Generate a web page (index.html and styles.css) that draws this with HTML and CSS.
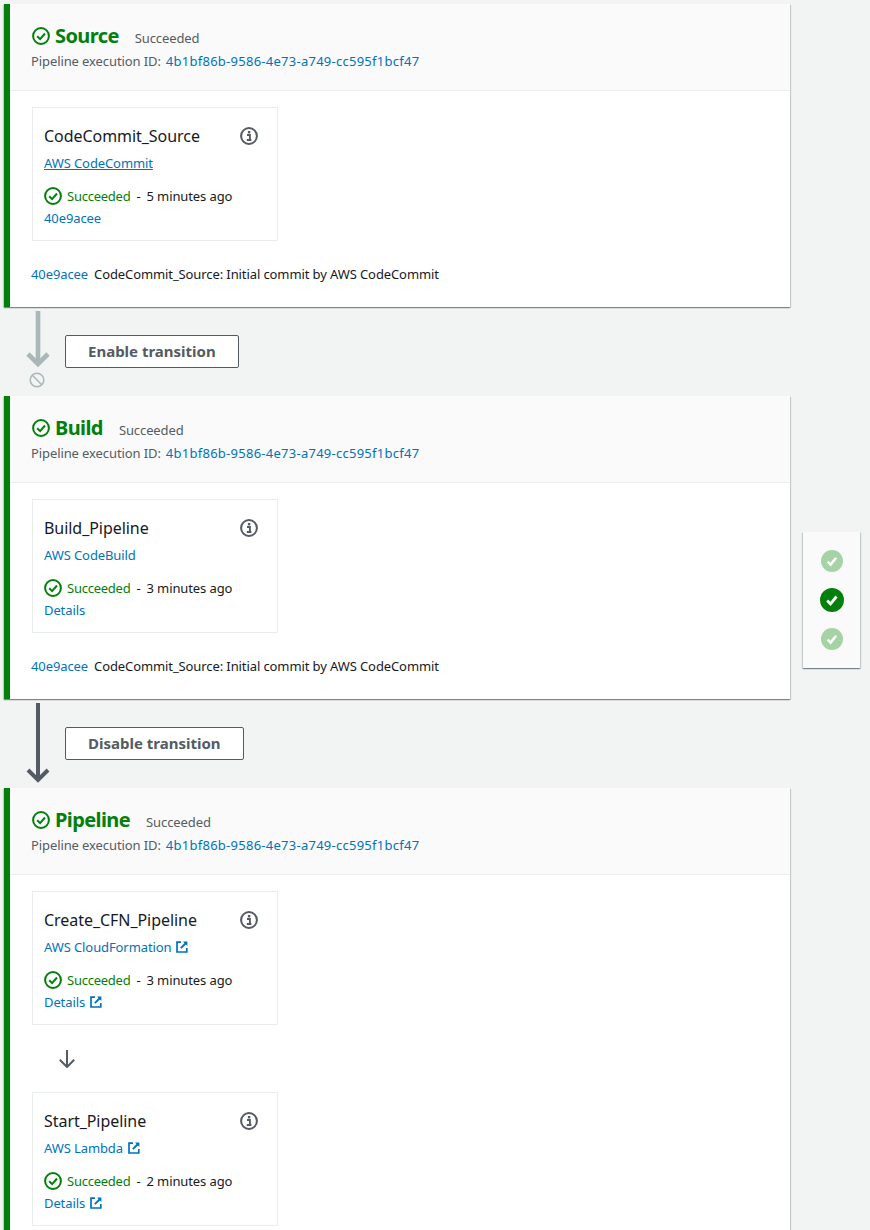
FILE: index.html
```html
<!DOCTYPE html>
<html lang="en">
<head>
<meta charset="utf-8">
<title>Pipeline</title>
<link rel="stylesheet" href="styles.css">
</head>
<body>
<svg class="sprite" aria-hidden="true">
  <symbol id="ok" viewBox="0 0 18 18"><circle cx="9" cy="9" r="7.9" fill="none" stroke="currentColor" stroke-width="2"/><path d="M5.2 9.2l2.9 2.9 4.9-5.6" fill="none" stroke="currentColor" stroke-width="2"/></symbol>
  <symbol id="info" viewBox="0 0 18 18"><circle cx="9" cy="9" r="7.9" fill="none" stroke="currentColor" stroke-width="2"/><rect x="7.9" y="4" width="2.4" height="2.4" fill="currentColor"/><path d="M7 8h2.9v4.4M6.8 13h4.6" fill="none" stroke="currentColor" stroke-width="1.9"/></symbol>
  <symbol id="ext" viewBox="0 0 12 12"><path d="M5 1.200H1v9.800h9.800V7" fill="none" stroke="currentColor" stroke-width="1.7"/><path d="M7 .6h4.400V5z" fill="currentColor"/><path d="M10 2L4.800 7.200" fill="none" stroke="currentColor" stroke-width="1.9"/></symbol>
  <symbol id="down-long" viewBox="0 0 24 80"><path d="M12 0v77" fill="none" stroke="currentColor" stroke-width="4"/><path d="M2 67l10 10 10-10" fill="none" stroke="currentColor" stroke-width="4"/></symbol>
  <symbol id="down-short" viewBox="0 0 24 56"><path d="M12 0v53" fill="none" stroke="currentColor" stroke-width="4.600"/><path d="M2 43l10 10 10-10" fill="none" stroke="currentColor" stroke-width="4.600"/></symbol>
  <symbol id="dot" viewBox="0 0 24 24"><circle cx="12" cy="12" r="12" fill="currentColor"/><path d="M7.200 12.600l3.300 3.300 6-7.400" fill="none" stroke="#fff" stroke-width="2.800"/></symbol>
</svg>
<main class="pipeline">

  <section class="stage">
    <header class="stage-head">
      <div class="stage-title">
        <svg class="i-stage"><use href="#ok"/></svg>
        <h2 class="stage-name">Source</h2>
        <span class="stage-status">Succeeded</span>
      </div>
      <p class="exec">Pipeline execution ID:<a class="link exec-id" href="#">4b1bf86b-9586-4e73-a749-cc595f1bcf47</a></p>
    </header>
    <div class="stage-body">
      <article class="action">
        <div class="action-top"><h3 class="action-name">CodeCommit_Source</h3><svg class="i-info"><use href="#info"/></svg></div>
        <div class="provider"><a class="link under" href="#">AWS CodeCommit</a></div>
        <div class="status"><svg class="i-status"><use href="#ok"/></svg><span class="ok-text">Succeeded</span><span class="dash">-</span><span>5 minutes ago</span></div>
        <div class="detail"><a class="link" href="#">40e9acee</a></div>
      </article>
      <p class="commit"><a class="link" href="#">40e9acee</a><span>CodeCommit_Source: Initial commit by AWS CodeCommit</span></p>
    </div>
  </section>

  <div class="transition">
    <div class="arrow-col off">
      <svg class="i-down-short"><use href="#down-short"/></svg>
      <svg class="i-block" viewBox="0 0 16 16"><circle cx="8" cy="8" r="6.800" fill="none" stroke="currentColor" stroke-width="1.500"/><path d="M3.300 3.300l9.400 9.400" stroke="currentColor" stroke-width="1.500"/></svg>
    </div>
    <button class="btn" type="button">Enable transition</button>
  </div>

  <section class="stage has-nav">
    <header class="stage-head">
      <div class="stage-title">
        <svg class="i-stage"><use href="#ok"/></svg>
        <h2 class="stage-name">Build</h2>
        <span class="stage-status">Succeeded</span>
      </div>
      <p class="exec">Pipeline execution ID:<a class="link exec-id" href="#">4b1bf86b-9586-4e73-a749-cc595f1bcf47</a></p>
    </header>
    <div class="stage-body">
      <article class="action">
        <div class="action-top"><h3 class="action-name">Build_Pipeline</h3><svg class="i-info"><use href="#info"/></svg></div>
        <div class="provider"><a class="link" href="#">AWS CodeBuild</a></div>
        <div class="status"><svg class="i-status"><use href="#ok"/></svg><span class="ok-text">Succeeded</span><span class="dash">-</span><span>3 minutes ago</span></div>
        <div class="detail"><a class="link" href="#">Details</a></div>
      </article>
      <p class="commit"><a class="link" href="#">40e9acee</a><span>CodeCommit_Source: Initial commit by AWS CodeCommit</span></p>
    </div>
    <aside class="stage-nav">
      <svg class="nav-dot faded"><use href="#dot"/></svg>
      <svg class="nav-dot current"><use href="#dot"/></svg>
      <svg class="nav-dot faded"><use href="#dot"/></svg>
    </aside>
  </section>

  <div class="transition">
    <div class="arrow-col">
      <svg class="i-down-long"><use href="#down-long"/></svg>
    </div>
    <button class="btn" type="button">Disable transition</button>
  </div>

  <section class="stage">
    <header class="stage-head">
      <div class="stage-title">
        <svg class="i-stage"><use href="#ok"/></svg>
        <h2 class="stage-name">Pipeline</h2>
        <span class="stage-status">Succeeded</span>
      </div>
      <p class="exec">Pipeline execution ID:<a class="link exec-id" href="#">4b1bf86b-9586-4e73-a749-cc595f1bcf47</a></p>
    </header>
    <div class="stage-body">
      <article class="action">
        <div class="action-top"><h3 class="action-name">Create_CFN_Pipeline</h3><svg class="i-info"><use href="#info"/></svg></div>
        <div class="provider"><a class="link" href="#">AWS CloudFormation<svg class="i-ext"><use href="#ext"/></svg></a></div>
        <div class="status"><svg class="i-status"><use href="#ok"/></svg><span class="ok-text">Succeeded</span><span class="dash">-</span><span>3 minutes ago</span></div>
        <div class="detail"><a class="link" href="#">Details<svg class="i-ext"><use href="#ext"/></svg></a></div>
      </article>
      <div class="between">
        <svg class="i-between" viewBox="0 0 18 18"><path d="M9 0v17M1.800 9.800L9 17l7.200-7.200" fill="none" stroke="currentColor" stroke-width="2"/></svg>
      </div>
      <article class="action">
        <div class="action-top"><h3 class="action-name">Start_Pipeline</h3><svg class="i-info"><use href="#info"/></svg></div>
        <div class="provider"><a class="link" href="#">AWS Lambda<svg class="i-ext"><use href="#ext"/></svg></a></div>
        <div class="status"><svg class="i-status"><use href="#ok"/></svg><span class="ok-text">Succeeded</span><span class="dash">-</span><span>2 minutes ago</span></div>
        <div class="detail"><a class="link" href="#">Details<svg class="i-ext"><use href="#ext"/></svg></a></div>
      </article>
    </div>
  </section>

</main>
</body>
</html>
```

FILE: styles.css
```css
* { box-sizing: border-box; }
html, body { margin: 0; padding: 0; height: 1230px; overflow: hidden; }
body {
  background: #f2f3f3;
  color: #16191f;
  font-family: "Noto Sans", "Liberation Sans", sans-serif;
  font-size: 13px;
  line-height: 18px;
  letter-spacing: -0.1px;
}
.sprite { position: absolute; width: 0; height: 0; }
.pipeline { width: 790px; padding: 4px 0 0 4px; }
.stage {
  position: relative;
  background: #fff;
  border-left: 6px solid #037f0c;
  box-shadow: 0 1px 1px 0 rgba(0,28,36,.3), 1px 1px 1px 0 rgba(0,28,36,.15), -1px 1px 1px 0 rgba(0,28,36,.15);
}
.stage-head {
  height: 87px;
  padding: 20px 22px 0;
  background: #fafafa;
  border-bottom: 1px solid #eaeded;
}
.stage-title { display: flex; align-items: center; height: 24px; }
.i-stage { width: 18px; height: 18px; color: #037f0c; margin-right: 5px; flex: none; }
.stage-name { margin: 0; font-size: 20px; line-height: 24px; font-weight: 700; color: #037f0c; letter-spacing: -0.6px; }
.stage-status { margin-left: 16px; color: #545b64; position: relative; top: 2px; }
.exec { margin: 4px 0 0 -1px; color: #545b64; }
.exec-id { margin-left: 5px; letter-spacing: 0.26px; }
.link { color: #0073bb; text-decoration: none; }
.under { text-decoration: underline; }
.stage-body { padding: 16px 22px 0; height: 216px; }
.stage:last-child .stage-body { height: 360px; }
.action {
  width: 246px;
  height: 134px;
  padding: 17px 19px 0 11px;
  background: #fff;
  border: 1px solid #eaeded;
}
.action-top { display: flex; justify-content: space-between; align-items: center; height: 22px; }
.action-name { margin: 0; font-size: 16px; line-height: 22px; font-weight: 400; color: #16191f; letter-spacing: -0.05px; }
.i-info { width: 18px; height: 18px; color: #545b64; flex: none; margin-top: -1px; }
.provider { margin-top: 7px; height: 18px; }
.status { display: flex; align-items: center; margin-top: 14px; height: 20px; }
.i-status { width: 18px; height: 18px; color: #037f0c; margin-right: 5px; flex: none; }
.ok-text { color: #037f0c; letter-spacing: -0.25px; }
.dash { margin: 0 6px; }
.detail { margin-top: 3px; height: 18px; }
.i-ext { width: 12px; height: 12px; margin-left: 5px; vertical-align: -1px; }
.commit { display: flex; gap: 6px; margin: 24px 0 0 -1px; color: #16191f; }
.between { height: 67px; padding: 25px 0 0 26px; }
.i-between { display: block; width: 18px; height: 18px; color: #545b64; }
.transition { display: flex; height: 89px; padding-left: 21px; }
.arrow-col { display: flex; flex-direction: column; width: 40px; flex: none; color: #545b64; }
.arrow-col.off { color: #aab7b8; }
.i-down-long { display: block; width: 24px; height: 80px; margin: 4px 0 0 .5px; flex: none; }
.i-down-short { display: block; width: 24px; height: 56px; margin: 4px 0 0 .5px; flex: none; }
.i-block { display: block; width: 16px; height: 16px; margin: 5px 0 0 4px; flex: none; }
.btn {
  align-self: flex-start;
  height: 33px;
  margin-top: 28px;
  padding: 0 22px 2px;
  background: #fff;
  border: 1px solid #545b64;
  border-radius: 2px;
  color: #545b64;
  font: 700 15px/18px "Noto Sans", "Liberation Sans", sans-serif;
}
.stage-nav {
  position: absolute;
  left: 793px;
  top: 136px;
  display: flex;
  flex-direction: column;
  align-items: center;
  gap: 16px;
  width: 57px;
  height: 136px;
  padding-top: 18px;
  background: #fafafa;
  box-shadow: 0 1px 1px 0 rgba(0,28,36,.3), 1px 1px 1px 0 rgba(0,28,36,.15), -1px 1px 1px 0 rgba(0,28,36,.15);
}
.nav-dot { width: 22px; height: 22px; flex: none; }
.nav-dot.current { width: 24px; height: 24px; color: #037f0c; }
.nav-dot.faded { color: #a5d3a5; }
```
